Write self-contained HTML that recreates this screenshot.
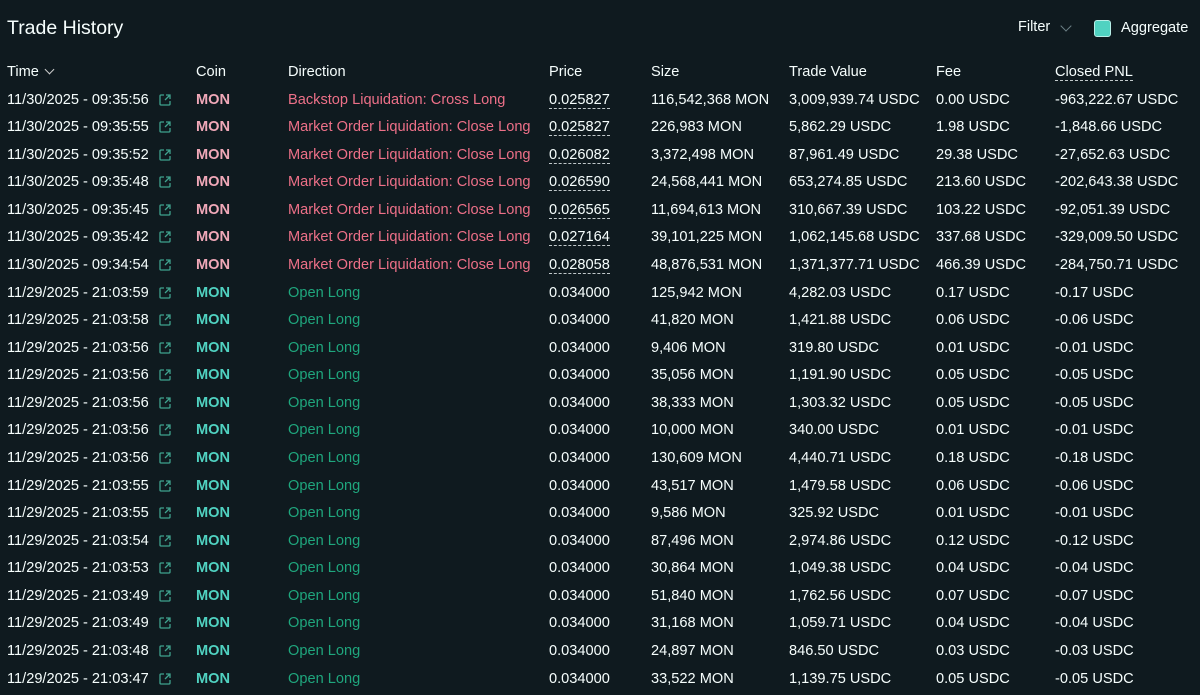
<!DOCTYPE html>
<html><head><meta charset="utf-8"><style>
body{margin:0;width:1200px;height:693px;overflow:hidden;background:#0f1a1f;font-family:"Liberation Sans",sans-serif;color:#f6fefd;font-size:14.6px}
.t{position:absolute;left:7px;top:17px;font-size:19.5px}
.f{position:absolute;left:1018px;top:19px;font-size:14.5px}
.chev{position:absolute;left:1062px;top:22px;width:7px;height:7px;border-right:1px solid #6b7f85;border-bottom:1px solid #6b7f85;transform:rotate(45deg)}
.cb{position:absolute;left:1094px;top:20px;width:15px;height:15px;background:#50d2c1;border:1.5px solid #b8efe8;border-radius:3px}
.ag{position:absolute;left:1121px;top:20px}
.w{position:absolute;left:0;top:1.5px;width:1200px;height:693px}
.r{position:absolute;left:0;width:1200px;height:20px;white-space:nowrap}
.r span{position:absolute;top:0}
.c0{left:7px}.c1{left:196px}.c2{left:288px}.c3{left:549px}.c4{left:651px}.c5{left:789px}.c6{left:936px}.c7{left:1055px}
.r svg{position:absolute;left:158px;top:1px}
.mr{color:#f0a8b8;font-weight:bold}.mg{color:#50d2c1;font-weight:bold}
.dr{color:#ed7088}.dg{color:#1fa67d}
.u{border-bottom:1px dashed #c0c8ca}
</style></head><body>
<div class="t">Trade History</div>
<div class="f">Filter</div><div class="chev"></div><div class="cb"></div><div class="ag">Aggregate</div>
<svg width="0" height="0" style="position:absolute"><defs><symbol id="i" viewBox="0 0 14 14"><path d="M6 2H3a1 1 0 0 0-1 1v8a1 1 0 0 0 1 1h8a1 1 0 0 0 1-1V8M8 2h4v4M12 2L7 7" fill="none" stroke="#3fa28e" stroke-width="1.3"/></symbol></defs></svg>
<div class="w">
<div class="r" style="top:62px"><span class="c0">Time <span style="position:relative;display:inline-block;width:6px;height:6px;border-right:1px solid #ccc;border-bottom:1px solid #ccc;transform:rotate(45deg);top:-3px;left:3px"></span></span><span class="c1">Coin</span><span class="c2">Direction</span><span class="c3">Price</span><span class="c4">Size</span><span class="c5">Trade Value</span><span class="c6">Fee</span><span class="c7 u">Closed PNL</span></div>

<div class="r" style="top:90px"><span class="c0">11/30/2025 - 09:35:56</span><svg width="14" height="14"><use href="#i"/></svg><span class="c1 mr">MON</span><span class="c2 dr">Backstop Liquidation: Cross Long</span><span class="c3 u">0.025827</span><span class="c4">116,542,368 MON</span><span class="c5">3,009,939.74 USDC</span><span class="c6">0.00 USDC</span><span class="c7">-963,222.67 USDC</span></div>
<div class="r" style="top:117.6px"><span class="c0">11/30/2025 - 09:35:55</span><svg width="14" height="14"><use href="#i"/></svg><span class="c1 mr">MON</span><span class="c2 dr">Market Order Liquidation: Close Long</span><span class="c3 u">0.025827</span><span class="c4">226,983 MON</span><span class="c5">5,862.29 USDC</span><span class="c6">1.98 USDC</span><span class="c7">-1,848.66 USDC</span></div>
<div class="r" style="top:145.1px"><span class="c0">11/30/2025 - 09:35:52</span><svg width="14" height="14"><use href="#i"/></svg><span class="c1 mr">MON</span><span class="c2 dr">Market Order Liquidation: Close Long</span><span class="c3 u">0.026082</span><span class="c4">3,372,498 MON</span><span class="c5">87,961.49 USDC</span><span class="c6">29.38 USDC</span><span class="c7">-27,652.63 USDC</span></div>
<div class="r" style="top:172.7px"><span class="c0">11/30/2025 - 09:35:48</span><svg width="14" height="14"><use href="#i"/></svg><span class="c1 mr">MON</span><span class="c2 dr">Market Order Liquidation: Close Long</span><span class="c3 u">0.026590</span><span class="c4">24,568,441 MON</span><span class="c5">653,274.85 USDC</span><span class="c6">213.60 USDC</span><span class="c7">-202,643.38 USDC</span></div>
<div class="r" style="top:200.3px"><span class="c0">11/30/2025 - 09:35:45</span><svg width="14" height="14"><use href="#i"/></svg><span class="c1 mr">MON</span><span class="c2 dr">Market Order Liquidation: Close Long</span><span class="c3 u">0.026565</span><span class="c4">11,694,613 MON</span><span class="c5">310,667.39 USDC</span><span class="c6">103.22 USDC</span><span class="c7">-92,051.39 USDC</span></div>
<div class="r" style="top:227.9px"><span class="c0">11/30/2025 - 09:35:42</span><svg width="14" height="14"><use href="#i"/></svg><span class="c1 mr">MON</span><span class="c2 dr">Market Order Liquidation: Close Long</span><span class="c3 u">0.027164</span><span class="c4">39,101,225 MON</span><span class="c5">1,062,145.68 USDC</span><span class="c6">337.68 USDC</span><span class="c7">-329,009.50 USDC</span></div>
<div class="r" style="top:255.4px"><span class="c0">11/30/2025 - 09:34:54</span><svg width="14" height="14"><use href="#i"/></svg><span class="c1 mr">MON</span><span class="c2 dr">Market Order Liquidation: Close Long</span><span class="c3 u">0.028058</span><span class="c4">48,876,531 MON</span><span class="c5">1,371,377.71 USDC</span><span class="c6">466.39 USDC</span><span class="c7">-284,750.71 USDC</span></div>
<div class="r" style="top:283px"><span class="c0">11/29/2025 - 21:03:59</span><svg width="14" height="14"><use href="#i"/></svg><span class="c1 mg">MON</span><span class="c2 dg">Open Long</span><span class="c3">0.034000</span><span class="c4">125,942 MON</span><span class="c5">4,282.03 USDC</span><span class="c6">0.17 USDC</span><span class="c7">-0.17 USDC</span></div>
<div class="r" style="top:310.6px"><span class="c0">11/29/2025 - 21:03:58</span><svg width="14" height="14"><use href="#i"/></svg><span class="c1 mg">MON</span><span class="c2 dg">Open Long</span><span class="c3">0.034000</span><span class="c4">41,820 MON</span><span class="c5">1,421.88 USDC</span><span class="c6">0.06 USDC</span><span class="c7">-0.06 USDC</span></div>
<div class="r" style="top:338.1px"><span class="c0">11/29/2025 - 21:03:56</span><svg width="14" height="14"><use href="#i"/></svg><span class="c1 mg">MON</span><span class="c2 dg">Open Long</span><span class="c3">0.034000</span><span class="c4">9,406 MON</span><span class="c5">319.80 USDC</span><span class="c6">0.01 USDC</span><span class="c7">-0.01 USDC</span></div>
<div class="r" style="top:365.7px"><span class="c0">11/29/2025 - 21:03:56</span><svg width="14" height="14"><use href="#i"/></svg><span class="c1 mg">MON</span><span class="c2 dg">Open Long</span><span class="c3">0.034000</span><span class="c4">35,056 MON</span><span class="c5">1,191.90 USDC</span><span class="c6">0.05 USDC</span><span class="c7">-0.05 USDC</span></div>
<div class="r" style="top:393.3px"><span class="c0">11/29/2025 - 21:03:56</span><svg width="14" height="14"><use href="#i"/></svg><span class="c1 mg">MON</span><span class="c2 dg">Open Long</span><span class="c3">0.034000</span><span class="c4">38,333 MON</span><span class="c5">1,303.32 USDC</span><span class="c6">0.05 USDC</span><span class="c7">-0.05 USDC</span></div>
<div class="r" style="top:420.9px"><span class="c0">11/29/2025 - 21:03:56</span><svg width="14" height="14"><use href="#i"/></svg><span class="c1 mg">MON</span><span class="c2 dg">Open Long</span><span class="c3">0.034000</span><span class="c4">10,000 MON</span><span class="c5">340.00 USDC</span><span class="c6">0.01 USDC</span><span class="c7">-0.01 USDC</span></div>
<div class="r" style="top:448.4px"><span class="c0">11/29/2025 - 21:03:56</span><svg width="14" height="14"><use href="#i"/></svg><span class="c1 mg">MON</span><span class="c2 dg">Open Long</span><span class="c3">0.034000</span><span class="c4">130,609 MON</span><span class="c5">4,440.71 USDC</span><span class="c6">0.18 USDC</span><span class="c7">-0.18 USDC</span></div>
<div class="r" style="top:476px"><span class="c0">11/29/2025 - 21:03:55</span><svg width="14" height="14"><use href="#i"/></svg><span class="c1 mg">MON</span><span class="c2 dg">Open Long</span><span class="c3">0.034000</span><span class="c4">43,517 MON</span><span class="c5">1,479.58 USDC</span><span class="c6">0.06 USDC</span><span class="c7">-0.06 USDC</span></div>
<div class="r" style="top:503.6px"><span class="c0">11/29/2025 - 21:03:55</span><svg width="14" height="14"><use href="#i"/></svg><span class="c1 mg">MON</span><span class="c2 dg">Open Long</span><span class="c3">0.034000</span><span class="c4">9,586 MON</span><span class="c5">325.92 USDC</span><span class="c6">0.01 USDC</span><span class="c7">-0.01 USDC</span></div>
<div class="r" style="top:531.1px"><span class="c0">11/29/2025 - 21:03:54</span><svg width="14" height="14"><use href="#i"/></svg><span class="c1 mg">MON</span><span class="c2 dg">Open Long</span><span class="c3">0.034000</span><span class="c4">87,496 MON</span><span class="c5">2,974.86 USDC</span><span class="c6">0.12 USDC</span><span class="c7">-0.12 USDC</span></div>
<div class="r" style="top:558.7px"><span class="c0">11/29/2025 - 21:03:53</span><svg width="14" height="14"><use href="#i"/></svg><span class="c1 mg">MON</span><span class="c2 dg">Open Long</span><span class="c3">0.034000</span><span class="c4">30,864 MON</span><span class="c5">1,049.38 USDC</span><span class="c6">0.04 USDC</span><span class="c7">-0.04 USDC</span></div>
<div class="r" style="top:586.3px"><span class="c0">11/29/2025 - 21:03:49</span><svg width="14" height="14"><use href="#i"/></svg><span class="c1 mg">MON</span><span class="c2 dg">Open Long</span><span class="c3">0.034000</span><span class="c4">51,840 MON</span><span class="c5">1,762.56 USDC</span><span class="c6">0.07 USDC</span><span class="c7">-0.07 USDC</span></div>
<div class="r" style="top:613.9px"><span class="c0">11/29/2025 - 21:03:49</span><svg width="14" height="14"><use href="#i"/></svg><span class="c1 mg">MON</span><span class="c2 dg">Open Long</span><span class="c3">0.034000</span><span class="c4">31,168 MON</span><span class="c5">1,059.71 USDC</span><span class="c6">0.04 USDC</span><span class="c7">-0.04 USDC</span></div>
<div class="r" style="top:641.4px"><span class="c0">11/29/2025 - 21:03:48</span><svg width="14" height="14"><use href="#i"/></svg><span class="c1 mg">MON</span><span class="c2 dg">Open Long</span><span class="c3">0.034000</span><span class="c4">24,897 MON</span><span class="c5">846.50 USDC</span><span class="c6">0.03 USDC</span><span class="c7">-0.03 USDC</span></div>
<div class="r" style="top:669px"><span class="c0">11/29/2025 - 21:03:47</span><svg width="14" height="14"><use href="#i"/></svg><span class="c1 mg">MON</span><span class="c2 dg">Open Long</span><span class="c3">0.034000</span><span class="c4">33,522 MON</span><span class="c5">1,139.75 USDC</span><span class="c6">0.05 USDC</span><span class="c7">-0.05 USDC</span></div>
</div>
</body></html>
